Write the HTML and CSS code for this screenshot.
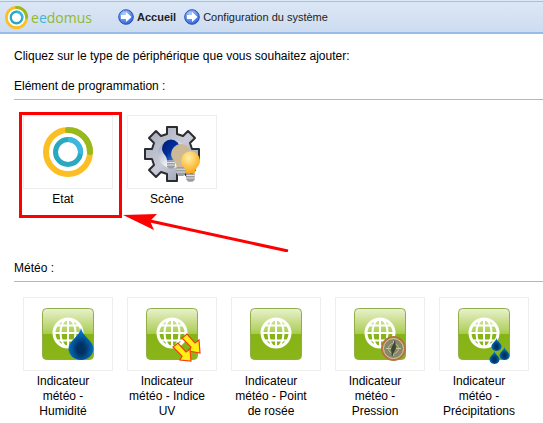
FILE: index.html
```
<!DOCTYPE html>
<html lang="fr">
<head>
  <meta charset="UTF-8" />
  <meta name="viewport" content="width=device-width, initial-scale=1.0" />
  <title>eedomus - Configuration du système</title>
  <link rel="stylesheet" href="styles.css">
</head>
<body>
  <!-- shared shapes -->
  <svg class="defs" aria-hidden="true">
    <defs>
      <linearGradient id="gloss" x1="0" y1="0" x2="0" y2="1">
        <stop offset="0" stop-color="#e9f2cf" />
        <stop offset="0.5" stop-color="#a9cb4e" />
        <stop offset="0.51" stop-color="#86b414" />
        <stop offset="1" stop-color="#8ab51a" />
      </linearGradient>
      <linearGradient id="metal" x1="0" y1="0" x2="1" y2="1">
        <stop offset="0" stop-color="#a3a6b4" />
        <stop offset="0.5" stop-color="#c9ccd8" />
        <stop offset="1" stop-color="#8b8fa0" />
      </linearGradient>
      <linearGradient id="plate" x1="0" y1="0" x2="1" y2="1">
        <stop offset="0" stop-color="#9195ab" />
        <stop offset="0.6" stop-color="#f2f3f8" />
      </linearGradient>
      <linearGradient id="navy" x1="0" y1="0" x2="1" y2="1">
        <stop offset="0" stop-color="#001a70" />
        <stop offset="0.5" stop-color="#00309c" />
        <stop offset="1" stop-color="#6ea8ee" />
      </linearGradient>
      <radialGradient id="amber" cx="0.4" cy="0.3" r="0.7">
        <stop offset="0" stop-color="#fff0a8" />
        <stop offset="1" stop-color="#fba915" />
      </radialGradient>
      <radialGradient id="water" cx="0.5" cy="0.65" r="0.5">
        <stop offset="0.3" stop-color="#003163" />
        <stop offset="1" stop-color="#0071c4" />
      </radialGradient>
      <radialGradient id="ball" cx="0.4" cy="0.3" r="0.7">
        <stop offset="0" stop-color="#b4d4ff" />
        <stop offset="1" stop-color="#2f62d9" />
      </radialGradient>
      <symbol id="rings" viewBox="0 0 50 50">
        <circle cx="25" cy="25" r="22" fill="#fff" stroke="#fbbf24" stroke-width="6" />
        <path d="M25 3A22 22 0 0 1 47 25" fill="none" stroke="#96ba1e" stroke-width="6" stroke-linecap="round" />
        <circle cx="25" cy="25" r="12.500" fill="#fff" stroke="#29a8c0" stroke-width="5" />
        <path d="M25 12.500A12.500 12.500 0 0 1 37.500 27" fill="none" stroke="#3bb7e0" stroke-width="5" />
      </symbol>
      <symbol id="go" viewBox="0 0 16 16">
        <circle cx="8" cy="8" r="7.300" fill="url(#ball)" stroke="#2c51b4" />
        <path d="M3 6h5V3l5.500 5-5.500 5v-3H3z" fill="#fff" />
      </symbol>
      <symbol id="globe" viewBox="0 0 52 52">
        <rect x="0.500" y="0.500" width="51" height="51" rx="4" fill="url(#gloss)" stroke="#8fae4a" />
        <g fill="none" stroke="#fff" stroke-width="2">
          <circle cx="26" cy="25" r="14" stroke-width="3" />
          <ellipse cx="26" cy="25" rx="7.500" ry="14" />
          <path d="M26 11v28M12 25h28M15 17.500h22M15 32.500h22" />
        </g>
      </symbol>
      <symbol id="drop" viewBox="0 0 26 32">
        <path d="M13 0C14 8 25.500 13 25.500 20.500C25.500 27 20 32 13 32S0.500 27 0.500 20.500C0.500 13 12 8 13 0z" fill="url(#water)" />
      </symbol>
      <symbol id="bulb" viewBox="0 0 18 30">
        <path d="M9 0A9 9 0 0 0 0 9C0 14 5 16 5 21H13C13 16 18 14 18 9A9 9 0 0 0 9 0z" />
        <path d="M5 21h8v6l-2 2H7l-2-2z" fill="#9b9da2" />
        <path d="M5 23h8M5 25.500h8" stroke="#e3e4e8" />
      </symbol>
    </defs>
  </svg>

  <header class="topbar">
    <a class="logo" href="#">
      <svg class="logo-icon" aria-hidden="true"><use href="#rings" /></svg>
      <span>e<b>e</b>domus</span>
    </a>
    <nav class="crumbs">
      <a class="crumb home" href="#"><svg aria-hidden="true"><use href="#go" /></svg>Accueil</a>
      <a class="crumb" href="#"><svg aria-hidden="true"><use href="#go" /></svg>Configuration du système</a>
    </nav>
  </header>

  <main class="content">
    <p class="intro">Cliquez sur le type de périphérique que vous souhaitez ajouter:</p>

    <section class="group">
      <h2>Elément de programmation :</h2>
      <div class="tiles">
        <a class="tile selected" href="#">
          <span class="thumb"><svg class="icon" viewBox="-3 -3 56 56" aria-hidden="true"><use href="#rings" width="50" height="50" /></svg></span>
          <span class="label">Etat</span>
          <svg class="pointer" viewBox="0 0 166 38" aria-hidden="true">
            <path d="M27 7L165 37" stroke="#f00" stroke-width="3" />
            <path d="M0 1L34 0L27 7L31 16z" fill="#f00" />
          </svg>
        </a>
        <a class="tile" href="#">
          <span class="thumb">
            <svg class="icon" viewBox="0 0 56 56" aria-hidden="true">
              <g transform="translate(28 30)">
                <path d="M-5-27H5V-20L11-18L16-23L23-16L18-11L20-5H27V5H20L18 11L23 16L16 23L11 18L5 20V27H-5V20L-11 18L-16 23L-23 16L-18 11L-20 5H-27V-5H-20L-18-11L-23-16L-16-23L-11-18L-5-20z" fill="url(#metal)" stroke="#2c2d31" stroke-width="2" stroke-linejoin="round" />
                <circle r="14" fill="url(#plate)" />
              </g>
              <use href="#bulb" x="18" y="15" width="18" height="31" fill="url(#navy)" />
              <use href="#bulb" x="27" y="20" width="20" height="33" fill="#cdb996" />
              <use href="#bulb" x="37" y="27" width="19" height="32" fill="url(#amber)" />
            </svg>
          </span>
          <span class="label">Scène</span>
        </a>
      </div>
    </section>

    <section class="group">
      <h2>Météo :</h2>
      <div class="tiles">
        <a class="tile" href="#">
          <span class="thumb">
            <svg class="icon" viewBox="-2 -2 56 56" aria-hidden="true">
              <use href="#globe" width="52" height="52" />
              <use href="#drop" x="26" y="20" width="26" height="32" />
            </svg>
          </span>
          <span class="label">Indicateur météo - Humidité</span>
        </a>
        <a class="tile" href="#">
          <span class="thumb">
            <svg class="icon" viewBox="-2 -2 56 56" aria-hidden="true">
              <use href="#globe" width="52" height="52" />
              <g fill="#ffef14" stroke="#f04010" stroke-width="1.200">
                <path d="M36 30l5-4 8 9 4-3 1 13-11-2 2-4z" />
                <path d="M27 39l5-4 8 9 4-3 1 12-11-1 2-4z" />
              </g>
            </svg>
          </span>
          <span class="label">Indicateur météo - Indice UV</span>
        </a>
        <a class="tile" href="#">
          <span class="thumb">
            <svg class="icon" viewBox="-2 -2 56 56" aria-hidden="true">
              <use href="#globe" width="52" height="52" />
            </svg>
          </span>
          <span class="label">Indicateur météo - Point de rosée</span>
        </a>
        <a class="tile" href="#">
          <span class="thumb">
            <svg class="icon" viewBox="-2 -2 56 56" aria-hidden="true">
              <use href="#globe" width="52" height="52" />
              <circle cx="39.500" cy="40.500" r="11.500" fill="#85886a" stroke="#b5743f" stroke-width="2" />
              <circle cx="39.500" cy="40.500" r="10" fill="none" stroke="#dccda0" />
              <circle cx="39.500" cy="40.500" r="5" fill="none" stroke="#b9b88f" />
              <path d="M39.500 33v15M32 40.500h15" stroke="#c6c59c" />
              <path d="M41 32l1 8-4 9-1-8z" fill="#3d4634" />
            </svg>
          </span>
          <span class="label">Indicateur météo - Pression</span>
        </a>
        <a class="tile" href="#">
          <span class="thumb">
            <svg class="icon" viewBox="-2 -2 56 56" aria-hidden="true">
              <use href="#globe" width="52" height="52" />
              <use href="#drop" x="33" y="30" width="11" height="13" />
              <use href="#drop" x="41" y="39" width="11" height="13" />
              <use href="#drop" x="31" y="43" width="11" height="13" />
            </svg>
          </span>
          <span class="label">Indicateur météo - Précipitations</span>
        </a>
      </div>
    </section>
  </main>
</body>
</html>
```

FILE: styles.css
```
body {
  margin: 0;
  background-color: #fff;
  color: #000;
  font-family: Arial, "Liberation Sans", sans-serif;
  font-size: 12px;
  line-height: 15px;
}

a {
  color: inherit;
  text-decoration: none;
}

.defs {
  position: absolute;
  width: 0;
  height: 0;
}

.topbar {
  display: flex;
  align-items: center;
  height: 30px;
  margin-top: 1px;
  border-top: 1px solid #a9bfd8;
  border-bottom: 2px solid #99bbe8;
  background: linear-gradient(#dbe7f5, #cddcf0);
  box-shadow: 0 -1px #dce9f8;
}

.logo {
  display: flex;
  align-items: center;
  gap: 3px;
  padding-left: 5px;
  width: 113px;
  box-sizing: border-box;
  color: #8fb92c;
  font-family: "Open Sans", sans-serif;
  font-size: 14px;
}

.logo b {
  color: #3db5dd;
  font-weight: normal;
}

.logo-icon {
  width: 23px;
  height: 23px;
}

.crumbs {
  display: flex;
  gap: 8px;
  padding-left: 5px;
  font-size: 11px;
}

.crumb {
  display: flex;
  align-items: center;
  gap: 3px;
  color: #222;
}

.crumb svg {
  width: 16px;
  height: 16px;
}

.home {
  font-weight: bold;
}

.content {
  padding: 15px 0 0 14px;
}

.intro {
  margin: 0 0 15px;
}

.group {
  margin-bottom: 54px;
}

.group:last-child {
  margin-bottom: 0;
}

h2 {
  margin: 0 0 15px;
  padding-bottom: 5px;
  border-bottom: 1px solid #99bbe8;
  font-size: 12px;
  font-weight: normal;
}

.tiles {
  display: flex;
  gap: 14px;
  padding-left: 9px;
}

.tile {
  position: relative;
  width: 90px;
}

.thumb {
  display: flex;
  align-items: center;
  justify-content: center;
  height: 72px;
  border: 1px solid #eee;
}

.icon {
  width: 56px;
  height: 56px;
  overflow: visible;
}

.label {
  display: block;
  margin-top: 3px;
  padding-right: 10px;
  text-align: center;
}

/* red frame and arrow lie over the tiles */
.selected::after {
  content: "";
  position: absolute;
  inset: -3px -9px -11px -4px;
  border: 3px solid #f00;
}

.pointer {
  position: absolute;
  left: 100px;
  top: 99px;
  width: 166px;
  height: 38px;
  z-index: 1;
}
```
